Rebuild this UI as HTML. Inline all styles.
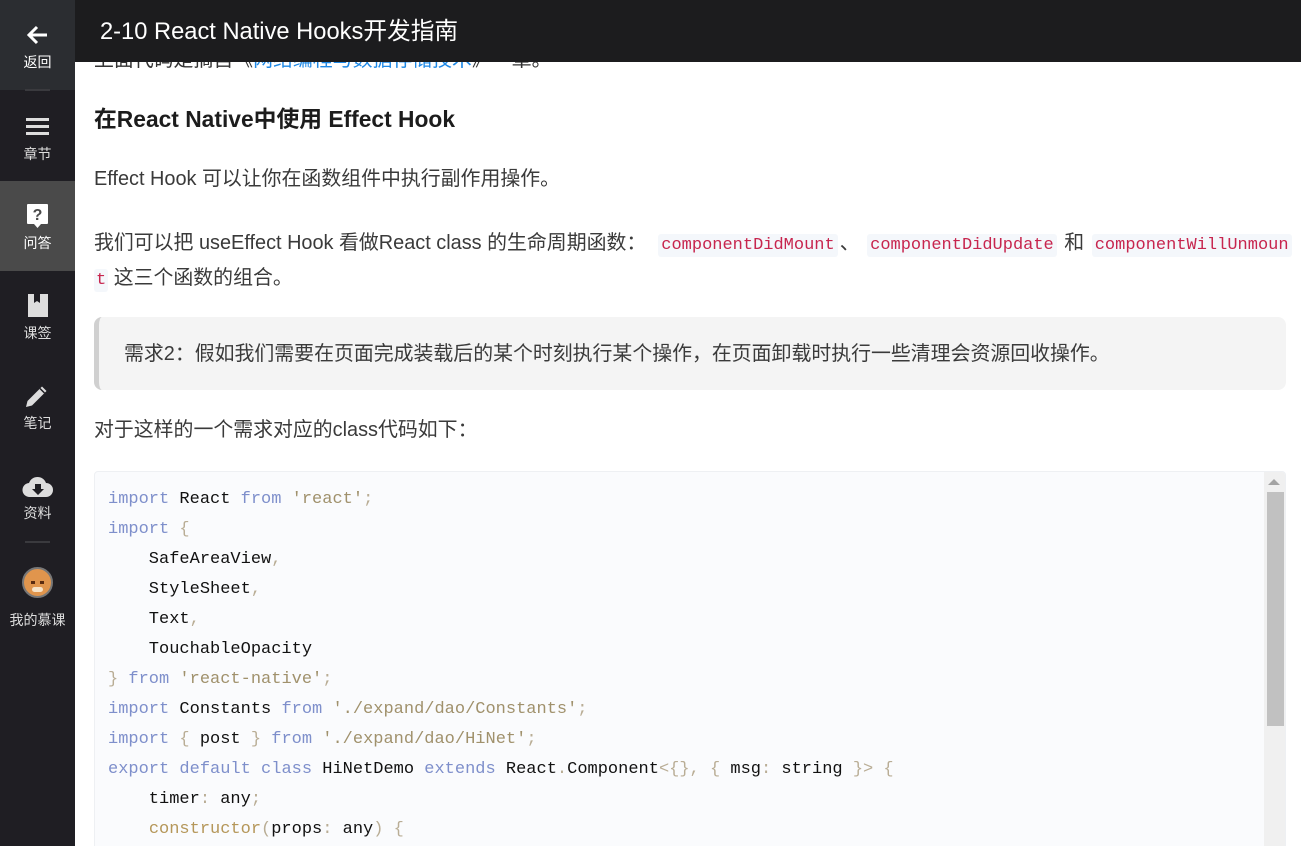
<!DOCTYPE html>
<html><head><meta charset="utf-8"><style>
*{margin:0;padding:0;box-sizing:border-box}
html,body{width:1301px;height:846px;overflow:hidden}
body{background:#fff;font-family:"Liberation Sans","Noto Sans CJK SC",sans-serif;color:#3a3a3a;position:relative}
.t{position:absolute;left:94px;font-size:19.9px;white-space:nowrap;line-height:30px}
#side{position:absolute;left:0;top:0;width:75px;height:846px;background:#1f1e23}
.it{position:absolute;left:0;width:75px;height:90px;color:#ddd;font-size:14px;text-align:center}
.it .lb{position:absolute;left:0;width:75px;top:50px}
#top{position:absolute;left:75px;top:0;width:1226px;height:62px;background:#1c1c1e;color:#fff;font-size:23.7px;line-height:64px;padding-left:25px}
code.i{font-family:"Liberation Mono",monospace;font-size:17px;color:#c7254e;background:#f4f7fb;border-radius:3px;padding:2px 3px;margin:0 2px}
#code{position:absolute;left:94px;top:471px;width:1192px;height:380px;background:#fafbfd;border:1px solid #eef0f3;border-radius:4px;overflow:hidden}
#code pre{position:absolute;left:13px;top:13px;font-family:"Liberation Mono",monospace;font-size:17px;line-height:30px;color:#111}
.k{color:#7e8fcb}.s{color:#a0916c}.p{color:#b9ad95}.f{color:#b5975a}
</style></head><body>
<div class="t" style="top:45px;color:#333">上面代码是摘自《<span style="color:#1e88e5">网络编程与数据存储技术</span>》一章。</div>
<div class="t" style="top:104px;font-size:22.8px;font-weight:bold;color:#1c1c1c">在React Native中使用 Effect Hook</div>
<div class="t" style="top:164px">Effect Hook 可以让你在函数组件中执行副作用操作。</div>
<div class="t" style="top:228px">我们可以把 useEffect Hook 看做React class 的生命周期函数：<code class="i" style="margin-left:12px">componentDidMount</code>、 <code class="i">componentDidUpdate</code> 和 <code class="i">componentWillUnmoun</code></div>
<div class="t" style="top:263px"><code class="i" style="padding:2px 2px;margin:0">t</code> 这三个函数的组合。</div>
<div style="position:absolute;left:94px;top:317px;width:1192px;height:73px;background:#f4f4f4;border-left:5px solid #d0d0d0;border-radius:8px"></div>
<div class="t" style="top:339px;left:124px">需求2：假如我们需要在页面完成装载后的某个时刻执行某个操作，在页面卸载时执行一些清理会资源回收操作。</div>
<div class="t" style="top:415px">对于这样的一个需求对应的class代码如下：</div>
<div id="code"><pre><span class="k">import</span> React <span class="k">from</span> <span class="s">'react'</span><span class="p">;</span>
<span class="k">import</span> <span class="p">{</span>
    SafeAreaView<span class="p">,</span>
    StyleSheet<span class="p">,</span>
    Text<span class="p">,</span>
    TouchableOpacity
<span class="p">}</span> <span class="k">from</span> <span class="s">'react-native'</span><span class="p">;</span>
<span class="k">import</span> Constants <span class="k">from</span> <span class="s">'./expand/dao/Constants'</span><span class="p">;</span>
<span class="k">import</span> <span class="p">{</span> post <span class="p">}</span> <span class="k">from</span> <span class="s">'./expand/dao/HiNet'</span><span class="p">;</span>
<span class="k">export</span> <span class="k">default</span> <span class="k">class</span> HiNetDemo <span class="k">extends</span> React<span class="p">.</span>Component<span class="p">&lt;{},</span> <span class="p">{</span> msg<span class="p">:</span> string <span class="p">}&gt;</span> <span class="p">{</span>
    timer<span class="p">:</span> any<span class="p">;</span>
    <span class="f">constructor</span><span class="p">(</span>props<span class="p">:</span> any<span class="p">)</span> <span class="p">{</span></pre>
<div style="position:absolute;left:1169px;top:0;width:22px;height:400px;background:#f0f0f0"></div>
<div style="position:absolute;left:1173px;top:7px;width:0;height:0;border-left:6px solid transparent;border-right:6px solid transparent;border-bottom:6px solid #a3a3a3"></div>
<div style="position:absolute;left:1172px;top:20px;width:17px;height:234px;background:#c1c1c1"></div>
</div>
<div id="side">
 <div class="it" style="top:0;background:#2b2d31"><svg style="position:absolute;left:26px;top:25px" width="24" height="20" viewBox="0 0 24 20"><path d="M21 10H4M11 2L3 10l8 8" stroke="#fff" stroke-width="3" fill="none"/></svg><div class="lb" style="top:52px;color:#fff">返回</div></div>
 <div style="position:absolute;left:25px;top:89px;width:25px;height:2px;background:#3a3a3e"></div>
 <div class="it" style="top:91px"><svg style="position:absolute;left:26px;top:27px" width="24" height="18"><rect y="0" width="23" height="3" fill="#ddd"/><rect y="7" width="23" height="3" fill="#ddd"/><rect y="14" width="23" height="3" fill="#ddd"/></svg><div class="lb" style="top:53px">章节</div></div>
 <div class="it" style="top:181px;background:#4a4a4a"><svg style="position:absolute;left:26px;top:22px" width="23" height="27"><path d="M2 1h19a1 1 0 0 1 1 1v18a1 1 0 0 1-1 1h-6l-3.5 4-3.5-4H2a1 1 0 0 1-1-1V2a1 1 0 0 1 1-1z" fill="#fff"/><text x="11.5" y="17" font-size="16" font-weight="bold" text-anchor="middle" fill="#4a4a4a" font-family="Liberation Sans">?</text></svg><div class="lb" style="top:52px;color:#fff">问答</div></div>
 <div class="it" style="top:271px"><svg style="position:absolute;left:27px;top:22px" width="22" height="25"><path d="M1 1h20v23H1z" fill="#ddd"/><path d="M7 1v9l3-2 3 2V1z" fill="#1f1e23"/></svg><div class="lb" style="top:52px">课签</div></div>
 <div class="it" style="top:361px"><svg style="position:absolute;left:24px;top:22px" width="26" height="26"><path d="M2 24l1.5-6L18 3.5l4.5 4.5L8 22.5z" fill="#ddd"/><path d="M16 5.5l4.5 4.5" stroke="#1f1e23" stroke-width="1.5"/></svg><div class="lb" style="top:52px">笔记</div></div>
 <div class="it" style="top:451px"><svg style="position:absolute;left:22px;top:25px" width="32" height="22"><path d="M8 21a7 7 0 0 1-1-14A9 9 0 0 1 24 7a7 7 0 0 1 0 14z" fill="#ddd"/><path d="M13 8h6v5h3l-6 6-6-6h3z" fill="#1f1e23"/></svg><div class="lb" style="top:52px">资料</div></div>
 <div style="position:absolute;left:25px;top:541px;width:25px;height:2px;background:#3a3a3e"></div>
 <div style="position:absolute;left:22px;top:567px;width:31px;height:31px;border-radius:50%;background:#e0954d;border:2px solid #777"><div style="position:absolute;left:7px;top:12px;width:4px;height:3px;background:#5a2b10"></div><div style="position:absolute;left:16px;top:12px;width:4px;height:3px;background:#5a2b10"></div><div style="position:absolute;left:8px;top:18px;width:11px;height:5px;background:#f7e3c8;border-radius:3px"></div></div>
 <div style="position:absolute;left:0;top:610px;width:75px;text-align:center;font-size:14px;color:#ddd">我的慕课</div>
</div>
<div id="top">2-10 React Native Hooks开发指南</div>
</body></html>
